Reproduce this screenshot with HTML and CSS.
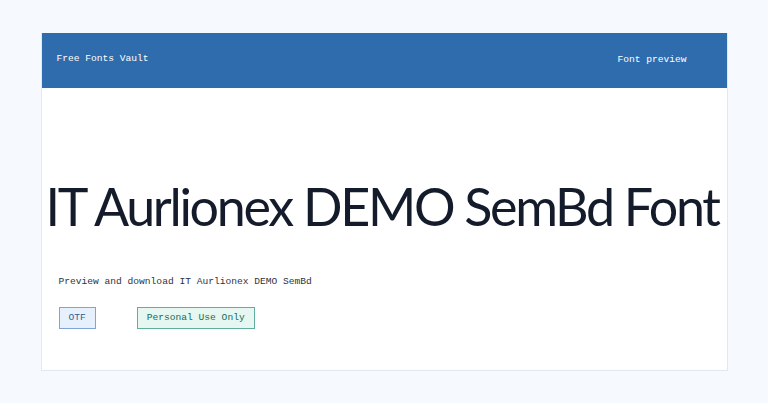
FILE: index.html
```html
<!DOCTYPE html>
<html lang="en">
<head>
    <meta charset="UTF-8">
    <meta name="viewport" content="width=device-width, initial-scale=1.0">
    <title>IT Aurlionex DEMO SemBd Font - Free Fonts Vault</title>
    <link rel="stylesheet" href="styles.css">
</head>
<body>
    <div class="page-card">
        <div class="site-header">
            <span class="brand">Free Fonts Vault</span>
            <span class="nav-label">Font preview</span>
        </div>

        <div class="preview-body">
            <h1 class="font-title">IT Aurlionex DEMO SemBd Font</h1>
            <p class="font-desc">Preview and download IT Aurlionex DEMO SemBd</p>
            <div class="tag-row">
                <span class="tag tag-format">OTF</span>
                <span class="tag tag-license">Personal Use Only</span>
            </div>
        </div>
    </div>
</body>
</html>
```

FILE: styles.css
```css
body {
    margin: 0;
    padding: 33px 0;
    background: #f6f9fe;
    font-family: 'Liberation Mono', monospace;
    font-size: 9.6px;
}

.page-card {
    width: 685px;
    margin: 0 auto;
    background: #ffffff;
    border: 1px solid #e2e8f0;
    border-top: none;
}

.site-header {
    display: flex;
    justify-content: space-between;
    align-items: center;
    height: 55px;
    padding: 0 40px 0 15px;
    background: #2f6cad;
    color: #ffffff;
}

.brand {
    margin-top: -4px;
}

.nav-label {
    margin-top: -2px;
}

.preview-body {
    padding: 92px 17px 41px;
}

.font-title {
    margin: 0 0 0 -13px;
    font-family: 'Lato', sans-serif;
    font-weight: normal;
    font-size: 52px;
    line-height: 52px;
    letter-spacing: -2.3px;
    color: #141b2b;
    white-space: nowrap;
}

.font-desc {
    margin: 44px 0 0;
    color: #2d3340;
}

.tag-row {
    display: flex;
    gap: 41px;
    margin-top: 20px;
}

.tag {
    display: inline-block;
    padding: 5px 9px;
    line-height: 10px;
    border: 1px solid;
}

.tag-format {
    background: #e7f1fd;
    border-color: #7ea5d8;
    color: #2b5d99;
}

.tag-license {
    background: #e6f6f1;
    border-color: #62ad9d;
    color: #0f6e58;
}
```
